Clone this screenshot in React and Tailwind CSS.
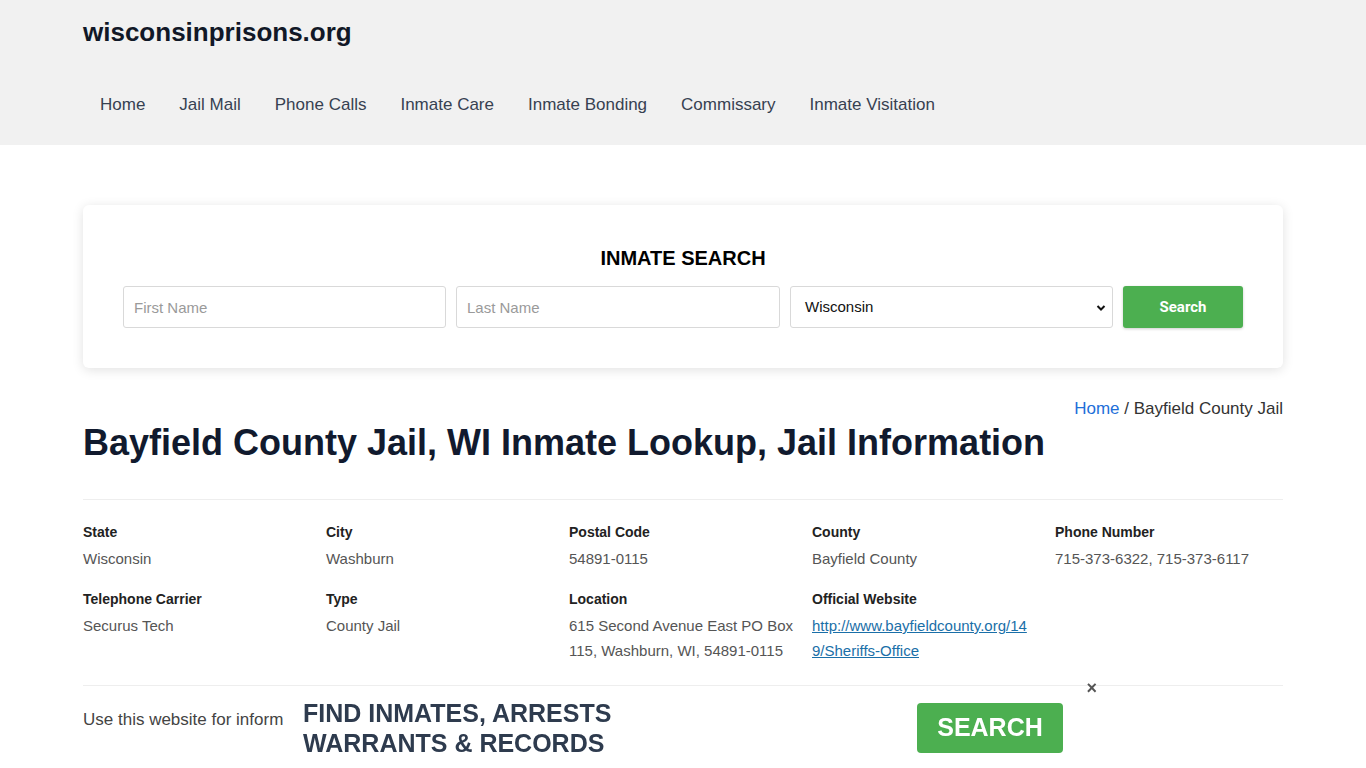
import React from 'react';

const navLinks = ['Home', 'Jail Mail', 'Phone Calls', 'Inmate Care', 'Inmate Bonding', 'Commissary', 'Inmate Visitation'];

const facts = [
  { label: 'State', value: 'Wisconsin' },
  { label: 'City', value: 'Washburn' },
  { label: 'Postal Code', value: '54891-0115' },
  { label: 'County', value: 'Bayfield County' },
  { label: 'Phone Number', value: '715-373-6322, 715-373-6117' },
  { label: 'Telephone Carrier', value: 'Securus Tech' },
  { label: 'Type', value: 'County Jail' },
  { label: 'Location', value: '615 Second Avenue East PO Box 115, Washburn, WI, 54891-0115' },
  { label: 'Official Website', value: 'http://www.bayfieldcounty.org/149/Sheriffs-Office', link: true },
];

export default function App() {
  return (
    <div className="min-h-screen bg-white font-['Liberation_Sans',Arial,sans-serif] text-[#333]">
      <header className="bg-[#f1f1f1] h-[145px]">
        <div className="w-[1200px] mx-auto">
          <div className="pt-[14px] h-[50px]">
            <a className="text-[26px] leading-[36px] font-bold text-[#111827]">wisconsinprisons.org</a>
          </div>
          <nav className="flex mt-[31px]">
            {navLinks.map((l) => (
              <a key={l} className="px-[17px] py-[12px] text-[17px] leading-[24px] text-[#374151]">{l}</a>
            ))}
          </nav>
        </div>
      </header>

      <main className="w-[1200px] mx-auto">
        <section className="mt-[60px] bg-white rounded-md shadow-[0_2px_12px_rgba(0,0,0,0.12)] px-[40px] pt-[39px] pb-[40px]">
          <h2 className="text-center text-[20px] leading-[28px] font-bold text-black mb-[14px]">INMATE SEARCH</h2>
          <div className="flex gap-[10px]">
            <input
              placeholder="First Name"
              className="w-[323px] h-[42px] border border-[#d9d9d9] rounded-[3px] px-[10px] text-[15px] placeholder:text-[#9a9a9a] outline-none"
            />
            <input
              placeholder="Last Name"
              className="w-[324px] h-[42px] border border-[#d9d9d9] rounded-[3px] px-[10px] text-[15px] placeholder:text-[#9a9a9a] outline-none"
            />
            <div className="relative w-[323px] h-[42px] border border-[#d9d9d9] rounded-[3px] flex items-center px-[14px] text-[15px] text-[#111]">
              Wisconsin
              <svg className="absolute right-[6px] top-[16px]" width="10" height="10" viewBox="0 0 10 10">
                <path d="M1.5 3 L5 6.5 L8.5 3" fill="none" stroke="#111" strokeWidth="2" />
              </svg>
            </div>
            <button className="w-[120px] h-[42px] pt-[1px] rounded-[3px] bg-[#4caf50] text-white text-[15px] font-bold font-['Roboto',sans-serif] shadow-[0_1px_3px_rgba(0,0,0,0.2)]">
              Search
            </button>
          </div>
        </section>

        <div className="mt-[29px] text-right text-[17px] leading-[24px] text-[#333]">
          <a className="text-[#1e6fd9]">Home</a> / Bayfield County Jail
        </div>
        <h1 className="text-[36px] leading-[44px] font-bold text-[#111a2e]">
          Bayfield County Jail, WI Inmate Lookup, Jail Information
        </h1>

        <div className="mt-[34px] border-t border-b border-[#eeeeee] pt-[22px] pb-[22px]">
          <div className="grid grid-cols-[repeat(5,228px)] gap-x-[15px] gap-y-[18px]">
            {facts.map((f) => (
              <div key={f.label}>
                <div className="text-[14px] leading-[20px] font-bold text-[#222] mb-[4px]">{f.label}</div>
                {f.link ? (
                  <a className="block max-w-[218px] text-[15px] leading-[25px] text-[#1a6fa8] underline break-all">{f.value}</a>
                ) : (
                  <div className="text-[15px] leading-[25px] text-[#555]">{f.value}</div>
                )}
              </div>
            ))}
          </div>
        </div>

        <p className="mt-[22px] text-[17px] leading-[24px] text-[#444] whitespace-nowrap">
          Use this website for inform
        </p>
      </main>

      <div className="fixed bottom-0 left-[288px] w-[812px] h-[80px] bg-white flex items-center">
        <div className="ml-[15px] text-[25px] leading-[30px] font-bold text-[#2e3b4e]">
          <div>FIND INMATES, ARRESTS</div>
          <div>WARRANTS &amp; RECORDS</div>
        </div>
        <button className="ml-auto mr-[37px] w-[146px] h-[50px] rounded-[4px] bg-[#4caf50] text-white text-[25px] font-bold">
          SEARCH
        </button>
        <span className="absolute right-[3px] top-[-10px] text-[18px] leading-[20px] text-[#555] font-bold">×</span>
      </div>
    </div>
  );
}
